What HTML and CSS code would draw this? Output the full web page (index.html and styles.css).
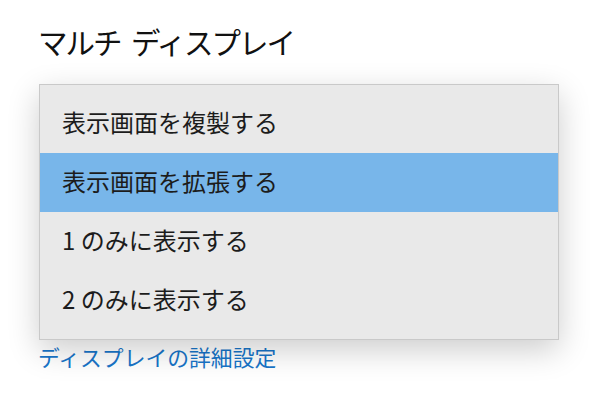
FILE: index.html
```html
<!DOCTYPE html>
<html lang="ja">
<head>
<meta charset="utf-8">
<link rel="stylesheet" href="styles.css">
</head>
<body>
<div class="page">
  <h1 class="title">マルチ ディスプレイ</h1>
  <div class="dropdown">
    <div class="item">表示画面を複製する</div>
    <div class="item selected">表示画面を拡張する</div>
    <div class="item">1 のみに表示する</div>
    <div class="item">2 のみに表示する</div>
  </div>
  <a class="link">ディスプレイの詳細設定</a>
</div>
</body>
</html>
```
FILE: styles.css
```css
html, body {
  margin: 0;
  padding: 0;
  background: #ffffff;
}
body {
  width: 600px;
  height: 400px;
  overflow: hidden;
  font-family: "Noto Sans CJK JP", "Noto Sans", sans-serif;
  color: #1a1a1a;
}
.page {
  display: flex;
  flex-direction: column;
  align-items: flex-start;
  padding: 20px 0 0 38px;
}
.title {
  margin: 0;
  font-size: 29.5px;
  letter-spacing: -2px;
  word-spacing: 6px;
  font-weight: 400;
  line-height: 42px;
  color: #111111;
}
.dropdown {
  margin: 22px 0 0 1px;
  width: 518px;
  padding: 9px 0 9px 0;
  background: #e9e9e9;
  border: 1px solid #c9c9c9;
  box-shadow: 0 10px 30px rgba(0, 0, 0, 0.2);
  position: relative;
  z-index: 1;
}
.item {
  box-sizing: border-box;
  height: 59px;
  display: flex;
  align-items: center;
  padding: 0 0 5px 22px;
  font-size: 24px;
  color: #1c1c1c;
}
.item.selected {
  background: #78b6ea;
}
.link {
  margin-top: 2px;
  font-size: 21.8px;
  line-height: 30px;
  color: #1875c9;
}
```
